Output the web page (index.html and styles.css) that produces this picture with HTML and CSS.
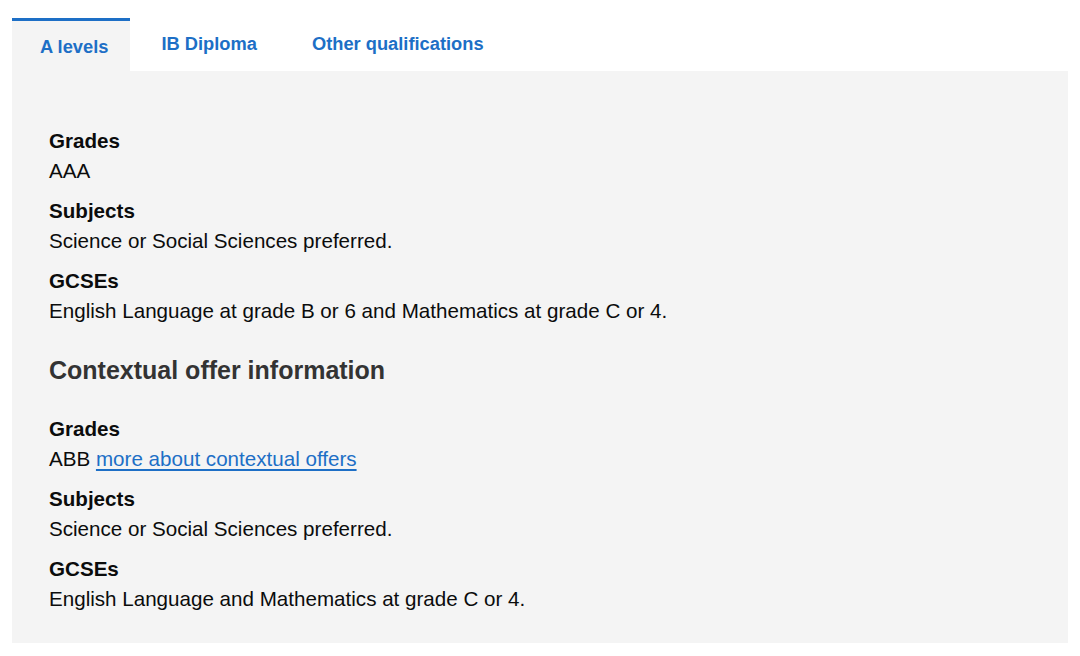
FILE: index.html
```html
<!DOCTYPE html>
<html lang="en">
<head>
<meta charset="utf-8">
<title>Entry requirements</title>
<link rel="stylesheet" href="styles.css">
</head>
<body>
<div class="tabs">
  <ul class="tab-list">
    <li class="tab tab-active"><a href="#">A levels</a></li>
    <li class="tab"><a href="#">IB Diploma</a></li>
    <li class="tab"><a href="#">Other qualifications</a></li>
  </ul>
  <div class="panel">
    <dl class="reqs">
      <dt>Grades</dt>
      <dd>AAA</dd>
      <dt>Subjects</dt>
      <dd>Science or Social Sciences preferred.</dd>
      <dt>GCSEs</dt>
      <dd>English Language at grade B or 6 and Mathematics at grade C or 4.</dd>
    </dl>
    <h3 class="sub-heading">Contextual offer information</h3>
    <dl class="reqs">
      <dt>Grades</dt>
      <dd>ABB <a class="link" href="#">more about contextual offers</a></dd>
      <dt>Subjects</dt>
      <dd>Science or Social Sciences preferred.</dd>
      <dt>GCSEs</dt>
      <dd>English Language and Mathematics at grade C or 4.</dd>
    </dl>
  </div>
</div>
</body>
</html>
```

FILE: styles.css
```css
html, body {
  margin: 0;
  padding: 0;
  background: #ffffff;
}
body {
  font-family: "Liberation Sans", Arial, Helvetica, sans-serif;
  color: #0b0c0c;
}
.tabs {
  padding: 18px 12px 14px 12px;
}
.tab-list {
  list-style: none;
  margin: 0;
  padding: 0;
  display: flex;
}
.tab {
  padding: 15px 24px 0 31px;
  font-size: 18.3px;
  line-height: 22px;
  font-weight: bold;
}
.tab a {
  color: #1d6fc6;
  text-decoration: none;
}
.tab-active {
  background: #f4f4f4;
  border-top: 3px solid #1d6fc6;
  padding: 15px 22px 13px 28px;
}
.panel {
  background: #f4f4f4;
  padding: 55px 37px 19px 37px;
}
.reqs {
  margin: 0;
}
.reqs dt {
  font-weight: bold;
  font-size: 20.6px;
  line-height: 30px;
}
.reqs dd {
  margin: 0 0 10px 0;
  font-size: 20.6px;
  line-height: 30px;
}
.sub-heading {
  margin: 29px 0 29px 0;
  font-size: 25px;
  line-height: 30px;
  font-weight: bold;
  color: #333333;
}
.link {
  color: #1d6fc6;
  text-decoration: underline;
  text-underline-offset: 3px;
}
```
